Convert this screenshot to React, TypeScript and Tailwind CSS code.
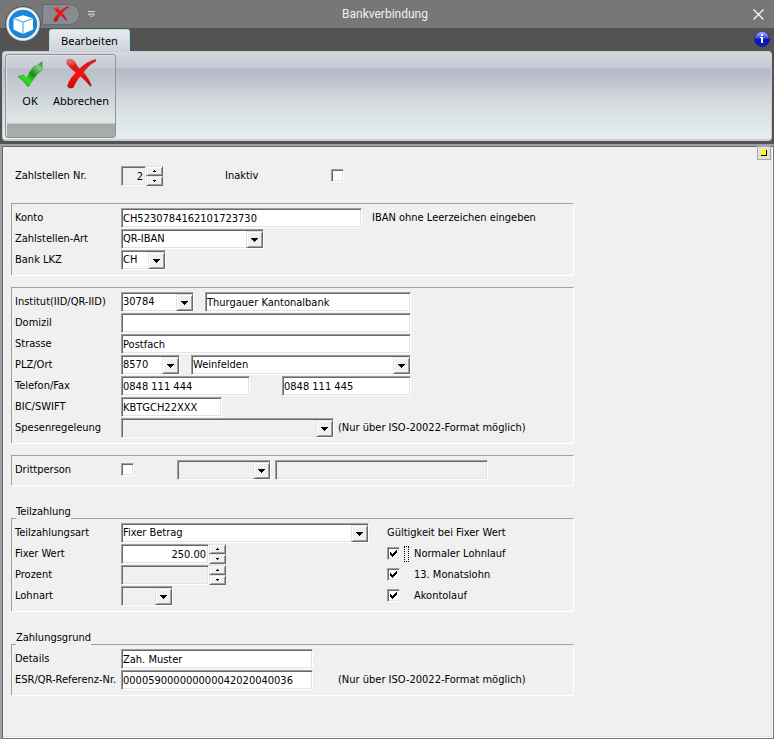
import { useState } from "react";
import type { ReactNode } from "react";

const sunken =
  "border border-t-[#a0a0a0] border-l-[#a0a0a0] border-r-white border-b-white shadow-[inset_1px_1px_0_#696969,inset_-1px_-1px_0_#e3e3e3]";
const raised =
  "border border-t-[#e3e3e3] border-l-[#e3e3e3] border-r-[#696969] border-b-[#696969] bg-[#f0f0f0] shadow-[inset_1px_1px_0_#ffffff,inset_-1px_-1px_0_#a0a0a0]";

function Field({ id, value = "", width, label, disabled, right }: { id: string; value?: string; width: string; label?: string; disabled?: boolean; right?: boolean }) {
  return (
    <input
      id={id}
      aria-label={label}
      defaultValue={value}
      disabled={disabled}
      className={`h-5 shrink-0 rounded-none pr-0.5 pl-px outline-none ${sunken} ${width} ${disabled ? "bg-[#f0f0f0]" : "bg-white"} ${right ? "text-right" : ""}`}
    />
  );
}

function Combo({ id, value = "", width, label, disabled }: { id: string; value?: string; width: string; label?: string; disabled?: boolean }) {
  return (
    <span className={`relative block h-5 shrink-0 ${width}`}>
      <select
        id={id}
        aria-label={label}
        disabled={disabled}
        className={`block h-full w-full appearance-none rounded-none pr-5 pl-px text-black opacity-100 outline-none ${sunken} ${disabled ? "bg-[#f0f0f0]" : "bg-white"}`}
      >
        <option>{value}</option>
      </select>
      <span className={`pointer-events-none absolute top-0.5 right-px bottom-px flex w-[17px] items-center justify-center ${raised}`}>
        <svg width="7" height="4" viewBox="0 0 7 4" shapeRendering="crispEdges">
          <path d="M0 0h7v1H6v1H5v1H4v1H3V3H2V2H1V1H0z" />
        </svg>
      </span>
    </span>
  );
}

function Spinner({ name }: { name: string }) {
  return (
    <span className="flex h-5 w-[17px] shrink-0 flex-col">
      <button type="button" aria-label={`${name} erhöhen`} className={`flex h-2.5 items-center justify-center ${raised}`}>
        <svg width="3" height="2" viewBox="0 0 3 2" shapeRendering="crispEdges">
          <path d="M1 0h1v1h1v1H0V1h1z" />
        </svg>
      </button>
      <button type="button" aria-label={`${name} verringern`} className={`flex h-2.5 items-center justify-center ${raised}`}>
        <svg width="3" height="2" viewBox="0 0 3 2" shapeRendering="crispEdges">
          <path d="M0 0h3v1H2v1H1V1H0z" />
        </svg>
      </button>
    </span>
  );
}

function Check({ id, initial = false }: { id: string; initial?: boolean }) {
  const [on, setOn] = useState(initial);
  return (
    <span className="mb-px grid size-[13px] shrink-0 place-items-center">
      <input
        id={id}
        type="checkbox"
        checked={on}
        onChange={() => setOn(!on)}
        className={`col-start-1 row-start-1 size-[13px] appearance-none rounded-none bg-white outline-none ${sunken}`}
      />
      {on && (
        <svg className="pointer-events-none col-start-1 row-start-1" width="7" height="7" viewBox="0 0 7 7" shapeRendering="crispEdges">
          <path d="M0 2h1v1h1v1h1V3h1V2h1V1h1V0h1v3H6v1H5v1H4v1H3v1H2V6H1V5H0z" />
        </svg>
      )}
    </span>
  );
}

function Row({ label, htmlFor, children }: { label: string; htmlFor: string; children: ReactNode }) {
  return (
    <div className="flex h-5 items-center">
      <label htmlFor={htmlFor} className="w-[106px] shrink-0 whitespace-nowrap">
        {label}
      </label>
      {children}
    </div>
  );
}

function Group({ title, children }: { title?: string; children: ReactNode }) {
  return (
    <section className="w-full max-w-[563px]">
      {title && <h2 className="relative -mb-px ml-[5px] w-fit bg-[#f0f0f0]">{title}</h2>}
      <div className="flex flex-col gap-px border border-t-[#a0a0a0] border-l-[#a0a0a0] border-r-white border-b-white pt-1 pb-[5px] pl-[3px]">
        {children}
      </div>
    </section>
  );
}

function CancelIcon({ className }: { className: string }) {
  return (
    <svg className={className} viewBox="0 0 32 32" aria-hidden="true">
      <defs>
        <linearGradient id="cancelRed" x1="0" y1="0" x2="0.3" y2="1">
          <stop offset="0" stopColor="#f58a8a" />
          <stop offset="0.3" stopColor="#e01616" />
          <stop offset="0.6" stopColor="#ff1010" />
          <stop offset="1" stopColor="#c00808" />
        </linearGradient>
      </defs>
      <path
        d="M1 1.5C4-.2 8 .8 9.500 3.500C11 6.500 12.500 8.500 14.500 10.500C19 6 25 2 31.500.5L32 2C26.500 5 22 9.500 18.500 14C22 18.500 25.500 23 27 28.500L26 29C22.500 25 19 21 15.200 18C12 22 9.500 26 8 30C5.500 32 2 31 1.700 28.500C3 23 7 18.500 10.800 14.500C7 11.500 3 8 1 5z"
        fill="url(#cancelRed)"
        stroke="#b01010"
        strokeWidth="0.5"
      />
    </svg>
  );
}

function OkIcon() {
  return (
    <svg className="h-[26px] w-[26px]" viewBox="0 0 26 26" aria-hidden="true">
      <defs>
        <linearGradient id="okGreen" x1="1" y1="0" x2="0.2" y2="1">
          <stop offset="0" stopColor="#1c6a1c" />
          <stop offset="0.2" stopColor="#7fd67f" />
          <stop offset="0.5" stopColor="#158a15" />
          <stop offset="0.75" stopColor="#35e321" />
          <stop offset="1" stopColor="#1c9c10" />
        </linearGradient>
      </defs>
      <path d="M1 15.500L6.500 14L9.500 17.500C12 12 14.500 8.500 16.500 6C19 5 22 3.500 25 .8L25.200 9C20.500 12 16 18 12 25.200H10.500C7.500 21.500 5 18.500 1 15.500z" fill="url(#okGreen)" stroke="#2a9a22" strokeWidth="0.6" />
    </svg>
  );
}

function Header() {
  return (
    <header className="relative bg-[#535353] font-['Noto_Sans',sans-serif] text-[11px]/[16px]">
      <div className="grid h-7 grid-cols-[1fr_auto_1fr] items-center bg-[#777777] pr-1">
        <div className="flex items-center gap-2 pl-[42px]">
          <button type="button" aria-label="Abbrechen" className="flex h-[21px] w-[38px] items-center rounded-tr-full rounded-br-full border border-[#65686e] bg-[#878b92] pl-2.5">
            <CancelIcon className="size-4" />
          </button>
          <button type="button" aria-label="Symbolleiste anpassen">
            <svg width="7" height="7" viewBox="0 0 7 7" fill="none" stroke="#d8d8d8">
              <path d="M0 .5h7M.5 3L3.500 6L6.500 3z" />
            </svg>
          </button>
        </div>
        <h1 className="font-['Roboto',sans-serif] text-[12px]/[16px] text-[#f0f0f0]">Bankverbindung</h1>
        <div className="flex justify-end">
          <button type="button" aria-label="Schliessen" className="flex size-6 items-center justify-center">
            <svg width="11" height="11" viewBox="0 0 11 11" stroke="#ffffff" strokeWidth="1.200">
              <path d="M.5 .5L10.500 10.500M10.500 .5L.5 10.500" />
            </svg>
          </button>
        </div>
      </div>
      <div className="flex h-[23px] items-end justify-between pr-1 pl-[49px]">
        <button type="button" className="h-[22px] w-[81px] rounded-t-[3px] border border-b-0 border-[#a8e0ea] bg-linear-to-b from-[#e8eaee] to-[#cfd3db] text-black">
          Bearbeiten
        </button>
        <button type="button" aria-label="Info" className="mb-1 size-4">
          <svg width="16" height="16" viewBox="0 0 16 16">
            <defs>
              <linearGradient id="infoShine" x1="0" y1="0" x2="0" y2="1">
                <stop offset="0" stopColor="#b8c0ff" />
                <stop offset="0.45" stopColor="#3a46e0" />
                <stop offset="0.5" stopColor="#0c14c8" />
                <stop offset="1" stopColor="#1018b0" />
              </linearGradient>
            </defs>
            <circle cx="8" cy="8" r="7.500" fill="url(#infoShine)" stroke="#0c1488" strokeWidth="0.600" />
            <path d="M7 3h2v2H7zM6 6h3v6H7V7H6z" fill="#fff" />
          </svg>
        </button>
      </div>
      <div className="pr-0.5 pb-[3px] pl-0.5">
        <div className="h-[90px] rounded-[4px] border border-b-2 border-[#c9cdd2] bg-[linear-gradient(to_bottom,#d6d9e0_0px,#c3c8d2_16px,#b2b9c6_17px,#d5dade_50px,#e4efee_86px)] pt-0.5 pl-0.5">
          <div className="flex h-[84px] w-[111px] items-start rounded-[3px] border border-[#8f9398] bg-[linear-gradient(to_bottom,#d2d5dd_0px,#c6cad2_13px,#b9bec8_14px,#e0e8e7_68px,#a3a8a7_69px,#a9adac_82px)] pl-1 shadow-[inset_1px_1px_0_#dfe2e6]">
            <button type="button" className="flex w-10 flex-col items-center pt-1.5">
              <OkIcon />
              <span className="pt-1.5">OK</span>
            </button>
            <button type="button" className="flex w-[62px] flex-col items-center pt-1">
              <CancelIcon className="h-[30px] w-8" />
              <span className="pt-1">Abbrechen</span>
            </button>
          </div>
        </div>
      </div>
      <button type="button" aria-label="Anwendungsmenü" className="absolute top-1.5 left-[5px] size-9">
        <svg width="36" height="36" viewBox="0 0 36 36">
          <circle cx="18" cy="18" r="17.500" fill="#c8ccd0" stroke="#4a4d50" />
          <circle cx="18" cy="18" r="16" fill="#f4f6f8" />
          <circle cx="18" cy="18" r="14.300" fill="#1a86d8" />
          <path d="M18 9.200L28 12.200V23.500L18 28L8.500 23.500V12.200z" fill="#ffffff" />
          <path d="M8.500 12.500L18 16L28 12.500M18 16V28" fill="none" stroke="#5aaae4" strokeWidth="1.200" />
        </svg>
      </button>
    </header>
  );
}

export default function App() {
  return (
    <div className="flex min-h-screen flex-col bg-[#535353] font-['DejaVu_Sans_Condensed','DejaVu_Sans',sans-serif] text-[11px]/[14px] text-black">
      <Header />
      <main className="flex flex-1 flex-col border-t-2 border-r border-b border-l-2 border-t-[#a0a0a0] border-r-[#777777] border-b-[#777777] border-l-[#a0a0a0] bg-[#f0f0f0] shadow-[inset_1px_1px_0_#696969,inset_-1px_-1px_0_#ffffff,inset_-2px_-2px_0_#e3e3e3]">
        <div className="flex justify-end pr-0.5">
          <button type="button" aria-label="Notiz" className="flex size-3.5 items-center justify-center border border-[#a8a8a8] bg-[#e0e0e0]">
            <span className="size-1.5 border-r border-b border-black bg-[#ffff00]" />
          </button>
        </div>
        <form className="flex flex-col pt-1.5 pr-4 pl-[9px]">
          <div className="flex pl-1">
            <Row label="Zahlstellen Nr." htmlFor="nr">
              <Field id="nr" value="2" width="w-[25px]" right disabled />
              <Spinner name="Zahlstellen Nr." />
              <label htmlFor="inaktiv" className="ml-[62px] w-[106px]">Inaktiv</label>
              <Check id="inaktiv" />
            </Row>
          </div>

          <div className="flex flex-col gap-[11px] pt-[17px]">
            <Group>
              <Row label="Konto" htmlFor="konto">
                <Field id="konto" value="CH5230784162101723730" width="w-[241px]" />
                <span className="pl-2.5">IBAN ohne Leerzeichen eingeben</span>
              </Row>
              <Row label="Zahlstellen-Art" htmlFor="art">
                <Combo id="art" value="QR-IBAN" width="w-[143px]" />
              </Row>
              <Row label="Bank LKZ" htmlFor="lkz">
                <Combo id="lkz" value="CH" width="w-[45px]" />
              </Row>
            </Group>

            <Group>
              <Row label="Institut(IID/QR-IID)" htmlFor="iid">
                <div className="flex gap-[11px]">
                  <Combo id="iid" value="30784" width="w-[73px]" />
                  <Field id="bank" label="Institut Name" value="Thurgauer Kantonalbank" width="w-[206px]" />
                </div>
              </Row>
              <Row label="Domizil" htmlFor="domizil">
                <Field id="domizil" width="w-[290px]" />
              </Row>
              <Row label="Strasse" htmlFor="strasse">
                <Field id="strasse" value="Postfach" width="w-[290px]" />
              </Row>
              <Row label="PLZ/Ort" htmlFor="plz">
                <div className="flex gap-[11px]">
                  <Combo id="plz" value="8570" width="w-[59px]" />
                  <Combo id="ort" label="Ort" value="Weinfelden" width="w-[220px]" />
                </div>
              </Row>
              <Row label="Telefon/Fax" htmlFor="telefon">
                <div className="flex gap-8">
                  <Field id="telefon" value="0848 111 444" width="w-[129px]" />
                  <Field id="fax" label="Fax" value="0848 111 445" width="w-[129px]" />
                </div>
              </Row>
              <Row label="BIC/SWIFT" htmlFor="bic">
                <Field id="bic" value="KBTGCH22XXX" width="w-[101px]" />
              </Row>
              <Row label="Spesenregeleung" htmlFor="spesen">
                <Combo id="spesen" width="w-[213px]" disabled />
                <span className="pl-1">(Nur über ISO-20022-Format möglich)</span>
              </Row>
            </Group>

            <Group>
              <Row label="Drittperson" htmlFor="dritt">
                <Check id="dritt" />
                <div className="flex gap-1 pl-[43px]">
                  <Combo id="drittnr" label="Drittperson Nummer" width="w-[94px]" disabled />
                  <Field id="drittname" label="Drittperson Name" width="w-[213px]" disabled />
                </div>
              </Row>
            </Group>
          </div>

          <div className="flex flex-col gap-[19px] pt-[19px]">
            <Group title="Teilzahlung">
              <div className="flex">
                <div className="flex w-[372px] shrink-0 flex-col gap-px">
                  <Row label="Teilzahlungsart" htmlFor="tart">
                    <Combo id="tart" value="Fixer Betrag" width="w-[248px]" />
                  </Row>
                  <Row label="Fixer Wert" htmlFor="wert">
                    <Field id="wert" value="250.00" width="w-[88px]" right />
                    <Spinner name="Fixer Wert" />
                  </Row>
                  <Row label="Prozent" htmlFor="prozent">
                    <Field id="prozent" width="w-[88px]" disabled />
                    <Spinner name="Prozent" />
                  </Row>
                  <Row label="Lohnart" htmlFor="lohnart">
                    <Combo id="lohnart" width="w-[52px]" disabled />
                  </Row>
                </div>
                <div className="flex flex-col gap-px">
                  <h3 className="flex h-5 items-center">Gültigkeit bei Fixer Wert</h3>
                  <div className="flex h-5 items-center">
                    <Check id="normal" initial />
                    <span className="mx-1 h-4 w-[5px] border border-dotted border-black" />
                    <label htmlFor="normal" className="pl-px">Normaler Lohnlauf</label>
                  </div>
                  <div className="flex h-5 items-center">
                    <Check id="dreizehn" initial />
                    <label htmlFor="dreizehn" className="pl-3.5">13. Monatslohn</label>
                  </div>
                  <div className="flex h-5 items-center">
                    <Check id="akonto" initial />
                    <label htmlFor="akonto" className="pl-3.5">Akontolauf</label>
                  </div>
                </div>
              </div>
            </Group>

            <Group title="Zahlungsgrund">
              <Row label="Details" htmlFor="details">
                <Field id="details" value="Zah. Muster" width="w-[192px]" />
              </Row>
              <Row label="ESR/QR-Referenz-Nr." htmlFor="esr">
                <Field id="esr" value="000059000000000042020040036" width="w-[192px]" />
                <span className="pl-[25px]">(Nur über ISO-20022-Format möglich)</span>
              </Row>
            </Group>
          </div>
        </form>
      </main>
    </div>
  );
}
